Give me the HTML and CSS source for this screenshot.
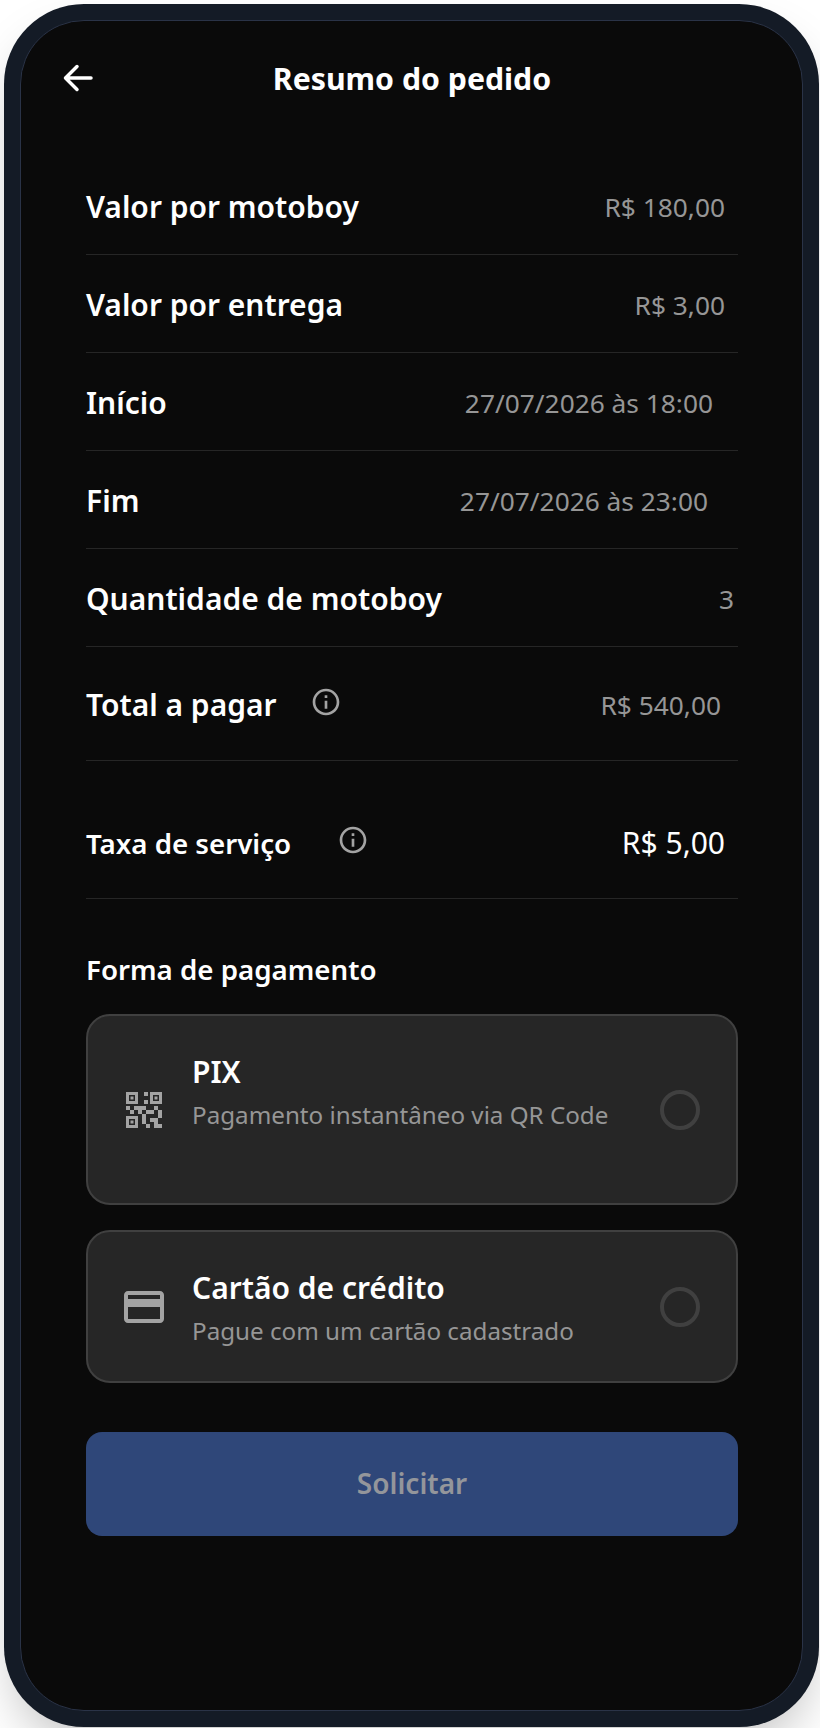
FILE: index.html

```html
<!DOCTYPE html>
<html lang="pt-BR">
<head>
<meta charset="UTF-8">
<title>Resumo do pedido</title>
<link rel="stylesheet" href="styles.css">
</head>
<body>
  <div class="phone">
    <main class="screen">
      <header class="top-bar">
        <button class="back-button" aria-label="Voltar">
          <svg viewBox="0 0 32 32" width="32" height="32" fill="none" stroke="#fff" stroke-width="3.5" stroke-linecap="round" stroke-linejoin="round"><path d="M29 16H3.500M15 4.500 3.500 16 15 27.500"/></svg>
        </button>
        <h1>Resumo do pedido</h1>
      </header>

      <div class="row">
        <span class="label">Valor por motoboy</span>
        <span class="value inset-13">R$ 180,00</span>
      </div>
      <div class="row">
        <span class="label">Valor por entrega</span>
        <span class="value inset-13">R$ 3,00</span>
      </div>
      <div class="row">
        <span class="label">Início</span>
        <span class="value inset-25">27/07/2026 às 18:00</span>
      </div>
      <div class="row">
        <span class="label">Fim</span>
        <span class="value inset-30">27/07/2026 às 23:00</span>
      </div>
      <div class="row">
        <span class="label">Quantidade de motoboy</span>
        <span class="value inset-4">3</span>
      </div>
      <div class="row row-tall">
        <span class="label label-info">Total a pagar
          <svg class="info-icon" viewBox="0 0 24 24" width="32" height="32"><path d="M11 7h2v2h-2zm0 4h2v6h-2zm1-9C6.48 2 2 6.48 2 12s4.48 10 10 10 10-4.48 10-10S17.52 2 12 2zm0 18c-4.41 0-8-3.59-8-8s3.59-8 8-8 8 3.59 8 8-3.59 8-8 8z"/></svg>
        </span>
        <span class="value inset-17">R$ 540,00</span>
      </div>
      <div class="row row-tall row-fee">
        <span class="label label-small label-info label-wide">Taxa de serviço
          <svg class="info-icon" viewBox="0 0 24 24" width="32" height="32"><path d="M11 7h2v2h-2zm0 4h2v6h-2zm1-9C6.48 2 2 6.48 2 12s4.48 10 10 10 10-4.48 10-10S17.52 2 12 2zm0 18c-4.41 0-8-3.59-8-8s3.59-8 8-8 8 3.59 8 8-3.59 8-8 8z"/></svg>
        </span>
        <span class="value value-strong inset-13">R$ 5,00</span>
      </div>

      <h2 class="section-title">Forma de pagamento</h2>

      <div class="pay-card pay-card-tall">
        <svg class="pay-icon" viewBox="0 0 24 24" width="48" height="48"><path d="M15 21h-2v-2h2v2zm-2-7h-2v5h2v-5zm8-2h-2v4h2v-4zm-2-2h-2v2h2v-2zM7 12H5v2h2v-2zm-2-2H3v2h2v-2zm7-5h2V3h-2v2zM4.500 4.500v3h3v-3h-3zM9 9H3V3h6v6zm-4.500 7.500v3h3v-3h-3zM9 21H3v-6h6v6zm7.500-16.500v3h3v-3h-3zM21 9h-6V3h6v6zm-2 10v-3h-4v2h2v3h4v-2h-2zm-2-7h-4v2h4v-2zm-4-2H7v2h2v2h2v-2h2v-2zm1-1V7h-2v2h2zM6.750 5.250h-1.500v1.500h1.500v-1.500zm0 12h-1.500v1.500h1.500v-1.500zm12-12h-1.500v1.500h1.500v-1.500z"/></svg>
        <div class="pay-text">
          <div class="pay-title">PIX</div>
          <div class="pay-desc">Pagamento instantâneo via QR Code</div>
        </div>
        <span class="radio"></span>
      </div>

      <div class="pay-card">
        <svg class="pay-icon" viewBox="0 0 24 24" width="48" height="48"><path d="M20 4H4c-1.110 0-1.990.89-1.990 2L2 18c0 1.110.89 2 2 2h16c1.110 0 2-.89 2-2V6c0-1.110-.89-2-2-2zm0 14H4v-6h16v6zm0-10H4V6h16v2z"/></svg>
        <div class="pay-text">
          <div class="pay-title">Cartão de crédito</div>
          <div class="pay-desc">Pague com um cartão cadastrado</div>
        </div>
        <span class="radio"></span>
      </div>

      <button class="submit-button" disabled>Solicitar</button>
    </main>
  </div>
</body>
</html>
```

FILE: styles.css

```css
* {
  box-sizing: border-box;
}

html, body {
  margin: 0;
  height: 1728px;
  overflow: hidden;
  background: #fff;
}

body {
  font-family: "Noto Sans", "Open Sans", Arial, sans-serif;
  padding: 4px 0 0 4px;
}

.phone {
  width: 815px;
  height: 1723px;
  padding: 16px;
  background: #141b26;
  border-radius: 80px;
  box-shadow: 0 25px 50px -12px rgba(0, 0, 0, 0.25);
}

.screen {
  height: 100%;
  padding: 0 64px 0 65px;
  background: #0a0a0a;
  border: 1px solid #2a3347;
  border-radius: 64px;
  color: #fff;
}

.top-bar {
  position: relative;
  height: 116px;
  margin-bottom: 20px;
  padding-bottom: 2px;
  display: flex;
  align-items: center;
  justify-content: center;
}

.top-bar h1 {
  margin: 0;
  font-size: 30.25px;
  font-weight: 700;
}

/* sits over the centred title */
.back-button {
  position: absolute;
  left: -24px;
  top: 41px;
  width: 32px;
  height: 32px;
  padding: 0;
  background: none;
  border: none;
}

.row {
  height: 98px;
  padding-top: 2px;
  display: flex;
  align-items: center;
  justify-content: space-between;
  border-bottom: 1px solid #262626;
}

.row-tall {
  height: 114px;
}

.row-fee {
  margin-top: 24px;
}

.label {
  font-size: 30px;
  font-weight: 600;
}

.label-small {
  font-size: 27.7px;
}

.label-info {
  display: flex;
  align-items: center;
  gap: 33px;
}

.label-wide {
  gap: 46px;
}

.info-icon {
  fill: #a3a3a3;
  margin-top: -6px;
}

.value {
  font-size: 26.3px;
  color: #969696;
}

.value-strong {
  font-size: 30px;
  color: #fff;
}

.inset-4 { margin-right: 4px; }
.inset-13 { margin-right: 13px; }
.inset-17 { margin-right: 17px; }
.inset-25 { margin-right: 25px; }
.inset-30 { margin-right: 30px; }

.section-title {
  margin: 49px 0 24px;
  font-size: 27.7px;
  line-height: 42px;
  font-weight: 600;
}

.pay-card {
  display: flex;
  align-items: center;
  gap: 24px;
  height: 153px;
  margin-bottom: 25px;
  padding: 0 32px;
  background: #262626;
  border: 2px solid #404040;
  border-radius: 24px;
}

.pay-card-tall {
  height: 191px;
}

.pay-icon {
  flex: none;
  fill: #a3a3a3;
}

.pay-text {
  flex: 1;
  align-self: flex-start;
  padding-top: 30px;
}

.pay-title {
  font-size: 30px;
  line-height: 52px;
  font-weight: 600;
}

.pay-desc {
  font-size: 24.2px;
  line-height: 34px;
  color: #969696;
}

.radio {
  flex: none;
  width: 40px;
  height: 40px;
  margin-right: 4px;
  border: 4px solid #404040;
  border-radius: 50%;
}

.submit-button {
  display: block;
  width: 100%;
  height: 104px;
  margin-top: 49px;
  padding: 0 0 2px;
  background: #2f4779;
  border: none;
  border-radius: 16px;
  font-family: inherit;
  font-size: 28px;
  font-weight: 600;
  color: #94969b;
}
```
